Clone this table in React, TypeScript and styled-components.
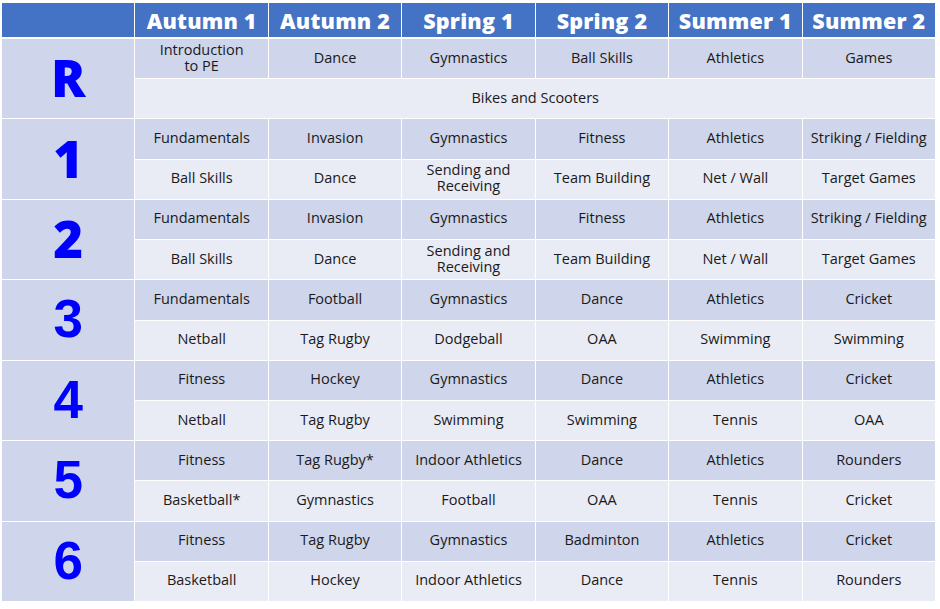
import React from "react";
import styled, { createGlobalStyle } from "styled-components";

const GlobalStyle = createGlobalStyle`
  html, body {
    margin: 0;
    padding: 0;
    background: #ffffff;
  }
`;

const terms = ["Autumn 1", "Autumn 2", "Spring 1", "Spring 2", "Summer 1", "Summer 2"];

type Year = {
  label: string;
  geometric: boolean;
  rows: string[][];
  span?: string;
};

// "\n" marks where the sheet wraps a long activity name
const years: Year[] = [
  {
    label: "R",
    geometric: true,
    rows: [["Introduction\nto PE", "Dance", "Gymnastics", "Ball Skills", "Athletics", "Games"]],
    span: "Bikes and Scooters",
  },
  {
    label: "1",
    geometric: true,
    rows: [
      ["Fundamentals", "Invasion", "Gymnastics", "Fitness", "Athletics", "Striking / Fielding"],
      ["Ball Skills", "Dance", "Sending and\nReceiving", "Team Building", "Net / Wall", "Target Games"],
    ],
  },
  {
    label: "2",
    geometric: true,
    rows: [
      ["Fundamentals", "Invasion", "Gymnastics", "Fitness", "Athletics", "Striking / Fielding"],
      ["Ball Skills", "Dance", "Sending and\nReceiving", "Team Building", "Net / Wall", "Target Games"],
    ],
  },
  {
    label: "3",
    geometric: false,
    rows: [
      ["Fundamentals", "Football", "Gymnastics", "Dance", "Athletics", "Cricket"],
      ["Netball", "Tag Rugby", "Dodgeball", "OAA", "Swimming", "Swimming"],
    ],
  },
  {
    label: "4",
    geometric: false,
    rows: [
      ["Fitness", "Hockey", "Gymnastics", "Dance", "Athletics", "Cricket"],
      ["Netball", "Tag Rugby", "Swimming", "Swimming", "Tennis", "OAA"],
    ],
  },
  {
    label: "5",
    geometric: false,
    rows: [
      ["Fitness", "Tag Rugby*", "Indoor Athletics", "Dance", "Athletics", "Rounders"],
      ["Basketball*", "Gymnastics", "Football", "OAA", "Tennis", "Cricket"],
    ],
  },
  {
    label: "6",
    geometric: false,
    rows: [
      ["Fitness", "Tag Rugby", "Gymnastics", "Badminton", "Athletics", "Cricket"],
      ["Basketball", "Hockey", "Indoor Athletics", "Dance", "Tennis", "Rounders"],
    ],
  },
];

const Table = styled.div`
  display: flex;
  flex-direction: column;
  gap: 2px;
  width: 933px;
  margin: 3px 0 0 2px;
  background: #ffffff;
`;

const HeaderRow = styled.div`
  display: grid;
  grid-template-columns: repeat(7, 1fr);
  gap: 1px;
  height: 34px;
`;

const HeaderCell = styled.div`
  display: flex;
  align-items: center;
  justify-content: center;
  background: #4472c4;
  color: #ffffff;
  font-family: "Open Sans", "DejaVu Sans", sans-serif;
  font-weight: 800;
  font-size: 21.5px;
  letter-spacing: 0.2px;
`;

const Body = styled.div`
  display: grid;
  grid-template-columns: repeat(7, 1fr);
  grid-template-rows: repeat(14, 1fr);
  gap: 1px;
  height: 562px;
`;

const YearCell = styled.div<{ $geometric: boolean }>`
  grid-row: span 2;
  display: flex;
  align-items: center;
  justify-content: center;
  padding-bottom: 2px;
  background: #cfd5ea;
  color: #0000ff;
  font-family: ${(p) =>
    p.$geometric ? `"Open Sans", "DejaVu Sans", sans-serif` : `"Liberation Sans", Arial, sans-serif`};
  font-weight: ${(p) => (p.$geometric ? 800 : 700)};
  font-size: ${(p) => (p.$geometric ? "51px" : "53px")};
  line-height: 1;
`;

const Cell = styled.div<{ $shade: "dark" | "light"; $span?: number }>`
  grid-column: span ${(p) => p.$span || 1};
  display: flex;
  align-items: center;
  justify-content: center;
  padding: 0 4px 2px;
  text-align: center;
  white-space: pre-line;
  background: ${(p) => (p.$shade === "dark" ? "#cfd5ea" : "#e9ebf5")};
  color: #1a1a1a;
  font-family: "Open Sans", "DejaVu Sans", sans-serif;
  font-size: 14.5px;
  line-height: 16px;
`;

const App = () => {
  return (
    <>
      <GlobalStyle />
      <Table>
        <HeaderRow>
          <HeaderCell />
          {terms.map((t) => (
            <HeaderCell key={t}>{t}</HeaderCell>
          ))}
        </HeaderRow>
        <Body>
          {years.map((y) => (
            <React.Fragment key={y.label}>
              <YearCell $geometric={y.geometric}>{y.label}</YearCell>
              {y.rows.map((row, ri) =>
                row.map((c, ci) => (
                  <Cell key={`${ri}-${ci}`} $shade={ri === 0 ? "dark" : "light"}>
                    {c}
                  </Cell>
                ))
              )}
              {y.span && (
                <Cell $shade="light" $span={6}>
                  {y.span}
                </Cell>
              )}
            </React.Fragment>
          ))}
        </Body>
      </Table>
    </>
  );
};

export default App;
